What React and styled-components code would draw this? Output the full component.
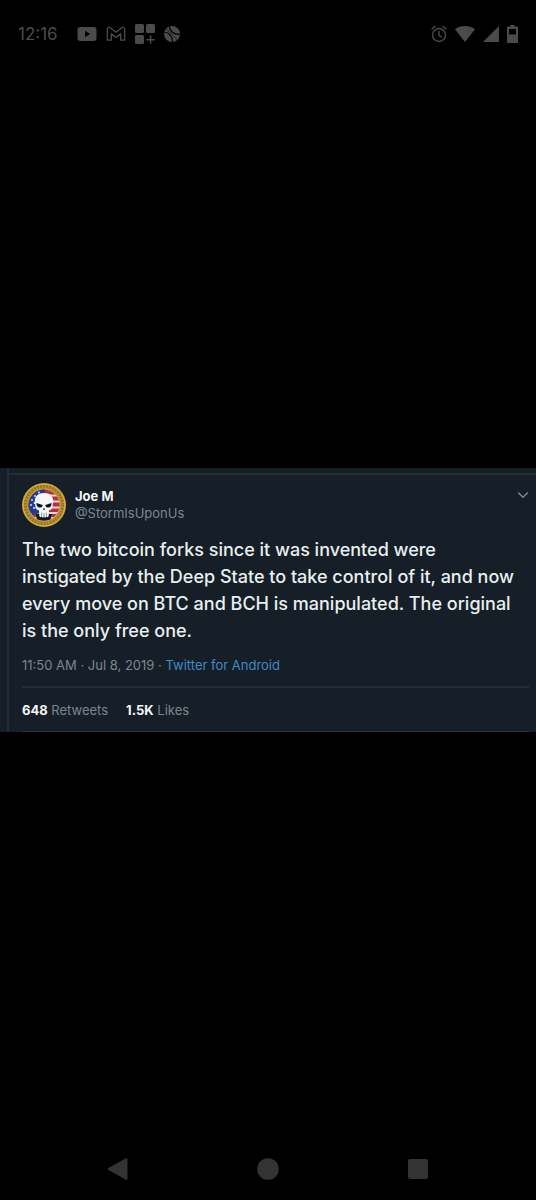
import styled, { createGlobalStyle } from "styled-components";

const text = [
  "The two bitcoin forks since it was invented were",
  "instigated by the Deep State to take control of it, and now",
  "every move on BTC and BCH is manipulated. The original",
  "is the only free one.",
].join("\n");

const stats = [
  { count: "648", label: "Retweets" },
  { count: "1.5K", label: "Likes" },
];

const YoutubeIcon = () => (
  <svg width="20" height="16" viewBox="0 0 20 16">
    <rect x="0.5" y="1" width="19" height="14" rx="3" fill="#4b4b4b" />
    <path d="M8 4.8v6.4L13.2 8z" fill="#000" />
  </svg>
);

const GmailIcon = () => (
  <svg width="20" height="16" viewBox="0 0 20 16" fill="none" stroke="#4b4b4b" strokeWidth="1.3" strokeLinejoin="round">
    <path d="M1.300 3.200v10.900h4V7.800L10 11.400l4.700-3.600v6.300h4V3.200c0-1.800-2-2.300-3.200-1.300L10 6.200 4.500 1.900C3.300.9 1.300 1.400 1.300 3.200z" />
  </svg>
);

const WidgetsIcon = () => (
  <svg width="20" height="20" viewBox="0 0 20 20" fill="#4b4b4b">
    <rect x="0" y="0" width="9" height="9" rx="1.5" />
    <rect x="11" y="0" width="9" height="9" rx="1.5" />
    <rect x="0" y="11" width="9" height="9" rx="1.5" />
    <path d="M14.800 11.500h1.500v3.400h3.400v1.500h-3.400v3.400h-1.500v-3.400h-3.400v-1.500h3.400z" />
  </svg>
);

const BallIcon = () => (
  <svg width="16" height="16" viewBox="0 0 16 16">
    <circle cx="8" cy="8" r="8" fill="#4b4b4b" />
    <g fill="none" stroke="#000" strokeWidth="1.100">
      <path d="M0 6.200c4.500-.3 8.300 3.500 8.600 10" />
      <path d="M5.300 0c.2 5 4.500 8.800 11 8.300" />
      <path d="M2 2.500 13.500 14" strokeWidth="0.6" />
    </g>
  </svg>
);

const AlarmIcon = () => (
  <svg width="16" height="18" viewBox="0 0 16 18" fill="none" stroke="#4b4b4b" strokeWidth="1.4">
    <circle cx="8" cy="10" r="6.500" />
    <path d="M8 6v4.300l2.800 2M.6 4.300 4.400 1.100M15.400 4.300 11.600 1.100" />
  </svg>
);

const WifiIcon = () => (
  <svg width="20" height="16" viewBox="0 0 20 16" fill="#4b4b4b">
    <path d="M0 3.300C5.600-1.100 14.400-1.100 20 3.300L10 16z" />
  </svg>
);

const SignalIcon = () => (
  <svg width="16" height="16" viewBox="0 0 16 16" fill="#4b4b4b">
    <path d="M16 0v16H0z" />
  </svg>
);

const BatteryIcon = () => (
  <svg width="11" height="18" viewBox="0 0 11 18" fill="#4b4b4b">
    <path fillRule="evenodd" d="M3.500 0h4v1.500H10c.6 0 1 .4 1 1V17c0 .6-.4 1-1 1H1c-.6 0-1-.4-1-1V2.500c0-.6.4-1 1-1h2.500zM2 4v5.500h7V4z" />
  </svg>
);

const SealAvatar = () => (
  <svg width="44" height="44" viewBox="0 0 44 44" role="img" aria-label="Joe M">
    <defs>
      <clipPath id="seal">
        <circle cx="22" cy="22" r="15.500" />
      </clipPath>
    </defs>
    <circle cx="22" cy="22" r="22" fill="#b98e2c" />
    <circle cx="22" cy="22" r="21" fill="none" stroke="#d9b653" strokeWidth="1" />
    <circle cx="22" cy="22" r="18.700" fill="none" stroke="#84742b" strokeWidth="2.600" strokeDasharray="1.500 1.600" />
    <circle cx="22" cy="22" r="16" fill="#d8bc50" />
    <g clipPath="url(#seal)">
      <path fill="#b7303f" d="M6 6h32v32H6z" />
      <path d="M22 12.500h16M22 18.500h16M22 24.500h16M6 30h32M6 35h32" stroke="#e3d5db" strokeWidth="2.200" />
      <path fill="#233c91" d="M6 6h17v22L12 32 6 29z" />
      <g fill="#e6ebfa">
        <circle cx="10" cy="17" r="0.9" />
        <circle cx="13" cy="13" r="0.9" />
        <circle cx="9" cy="22" r="0.9" />
        <circle cx="12.500" cy="20" r="0.9" />
        <circle cx="12" cy="25" r="0.9" />
        <circle cx="17" cy="9.500" r="0.9" />
      </g>
      <path fill="#111827" d="M14 31h16l-2 7H15z" />
    </g>
    <path fill="#f6f8f8" d="M22 10c-6 0-9.300 3.500-9.200 8 0 2 .6 3.200.5 4.800-.1 2.600 1.200 4 3.700 4.500l.3 5.800c.5 1.500 1.700 1.500 2.200.2.500 1.700 2 1.700 2.500.2.500 1.500 2 1.500 2.500-.2.500 1.300 1.700 1.300 2.200-.2l.3-5.800c2.500-.5 3.800-1.900 3.700-4.500-.1-1.600.5-2.800.5-4.800 0-4.500-3.200-8-9.200-8z" />
    <path fill="#10141c" d="m14.500 20 6.200 2c-.3 2.100-1.700 2.900-3.700 2.500-1.800-.5-2.600-2-2.500-4.500zM29.500 20l-6.200 2c.3 2.100 1.700 2.900 3.700 2.500 1.800-.5 2.600-2 2.500-4.500zM22 24.500l1.100 2.300h-2.200z" />
    <path d="M19.700 29.500v4M22 30v4M24.300 29.500v4" stroke="#59636c" strokeWidth="0.6" />
  </svg>
);

const App = () => {
  return (
    <Screen>
      <GlobalStyle />
      <StatusBar>
        <Clock>12:16</Clock>
        <Notifications>
          <YoutubeIcon />
          <GmailIcon />
          <WidgetsIcon />
          <BallIcon />
        </Notifications>
        <SystemIcons>
          <AlarmIcon />
          <WifiIcon />
          <SignalIcon />
          <BatteryIcon />
        </SystemIcons>
      </StatusBar>

      <Main>
        <Card>
          <Tweet>
            <Header>
              <SealAvatar />
              <Author>
                <Name>Joe M</Name>
                <Handle>@StormIsUponUs</Handle>
              </Author>
              <MoreButton type="button" aria-label="More">
                <svg width="12" height="8" viewBox="0 0 12 8" fill="none" stroke="#7b8790" strokeWidth="1.500">
                  <path d="m1.200 1.500 4.800 4.700 4.800-4.700" />
                </svg>
              </MoreButton>
            </Header>
            <Body>{text}</Body>
            <Meta>
              11:50 AM · Jul 8, 2019 · <SourceLink href="#">Twitter for Android</SourceLink>
            </Meta>
            <Stats>
              {stats.map((stat) => (
                <Stat key={stat.label}>
                  <Count>{stat.count}</Count> {stat.label}
                </Stat>
              ))}
            </Stats>
          </Tweet>
        </Card>
      </Main>

      <NavBar>
        <NavButton type="button" aria-label="Back">
          <svg width="22" height="22" viewBox="0 0 22 22" fill="#333">
            <path d="M1.500 9.900 18.600.4c1-.5 1.900 0 1.900 1.100v19c0 1.100-.9 1.600-1.900 1.100L1.500 12.100c-1-.6-1-1.600 0-2.200z" />
          </svg>
        </NavButton>
        <NavButton type="button" aria-label="Home">
          <svg width="22" height="22" viewBox="0 0 22 22" fill="#333">
            <circle cx="11" cy="11" r="10.800" />
          </svg>
        </NavButton>
        <NavButton type="button" aria-label="Recent apps">
          <svg width="22" height="22" viewBox="0 0 22 22" fill="#333">
            <rect x="1" y="1" width="20" height="20" rx="2" />
          </svg>
        </NavButton>
      </NavBar>
    </Screen>
  );
};

export default App;

// ===== Styled Components =====
const GlobalStyle = createGlobalStyle`
  * {
    box-sizing: border-box;
  }

  body {
    margin: 0;
    background: #000;
    font-family: Inter, "Liberation Sans", sans-serif;
  }

  svg {
    display: block;
    flex-shrink: 0;
  }
`;

const Screen = styled.div`
  display: flex;
  flex-direction: column;
  min-height: 100vh;
  background: #000;
`;

const StatusBar = styled.header`
  display: flex;
  align-items: center;
  height: 68px;
  padding: 0 18px;
`;

const Clock = styled.time`
  color: #4b4b4b;
  font-size: 17px;
  line-height: 20px;
`;

const Notifications = styled.div`
  display: flex;
  align-items: center;
  gap: 9px;
  margin-left: 19px;
`;

const SystemIcons = styled.div`
  display: flex;
  align-items: center;
  gap: 8px;
  margin-left: auto;
`;

const Main = styled.main`
  display: flex;
  flex: 1;
  flex-direction: column;
  justify-content: center;
`;

const Card = styled.div`
  padding-left: 7px;
  background: #161f27;
`;

const Tweet = styled.article`
  padding-top: 5px;
  border-left: 2px solid #222d34;
`;

const Header = styled.div`
  display: flex;
  gap: 9px;
  padding: 8px 7px 0 13px;
  border-top: 2px solid #22302f;
`;

const Author = styled.div`
  display: flex;
  flex: 1;
  flex-direction: column;
  padding-top: 5px;
`;

const Name = styled.span`
  color: #f3f6f6;
  font-size: 13px;
  font-weight: 700;
  line-height: 17px;
`;

const Handle = styled.span`
  color: #7b8790;
  font-size: 13px;
  line-height: 17px;
`;

const MoreButton = styled.button`
  align-self: flex-start;
  padding: 8px 0;
  background: none;
  border: none;
  cursor: pointer;
`;

const Body = styled.p`
  margin: 9px 0 11px 13px;
  color: #e9efef;
  font-size: 18px;
  font-weight: 500;
  line-height: 27px;
  white-space: pre-line;
`;

const Meta = styled.div`
  margin: 0 7px 0 13px;
  padding-bottom: 11px;
  border-bottom: 2px solid #222d34;
  color: #7b8790;
  font-size: 13px;
  line-height: 20px;
`;

const SourceLink = styled.a`
  color: #4089c7;
  text-decoration: none;
`;

const Stats = styled.div`
  display: flex;
  gap: 18px;
  margin: 0 7px 0 13px;
  padding: 12px 0 11px;
  border-bottom: 1px solid #2b363c;
`;

const Stat = styled.span`
  color: #7b8790;
  font-size: 13px;
  line-height: 20px;
`;

const Count = styled.strong`
  color: #f3f6f6;
  font-weight: 700;
`;

const NavBar = styled.nav`
  display: flex;
  align-items: center;
  justify-content: center;
  gap: 128px;
  height: 68px;
  padding-top: 6px;
`;

const NavButton = styled.button`
  padding: 0;
  background: none;
  border: none;
  cursor: pointer;
`;
